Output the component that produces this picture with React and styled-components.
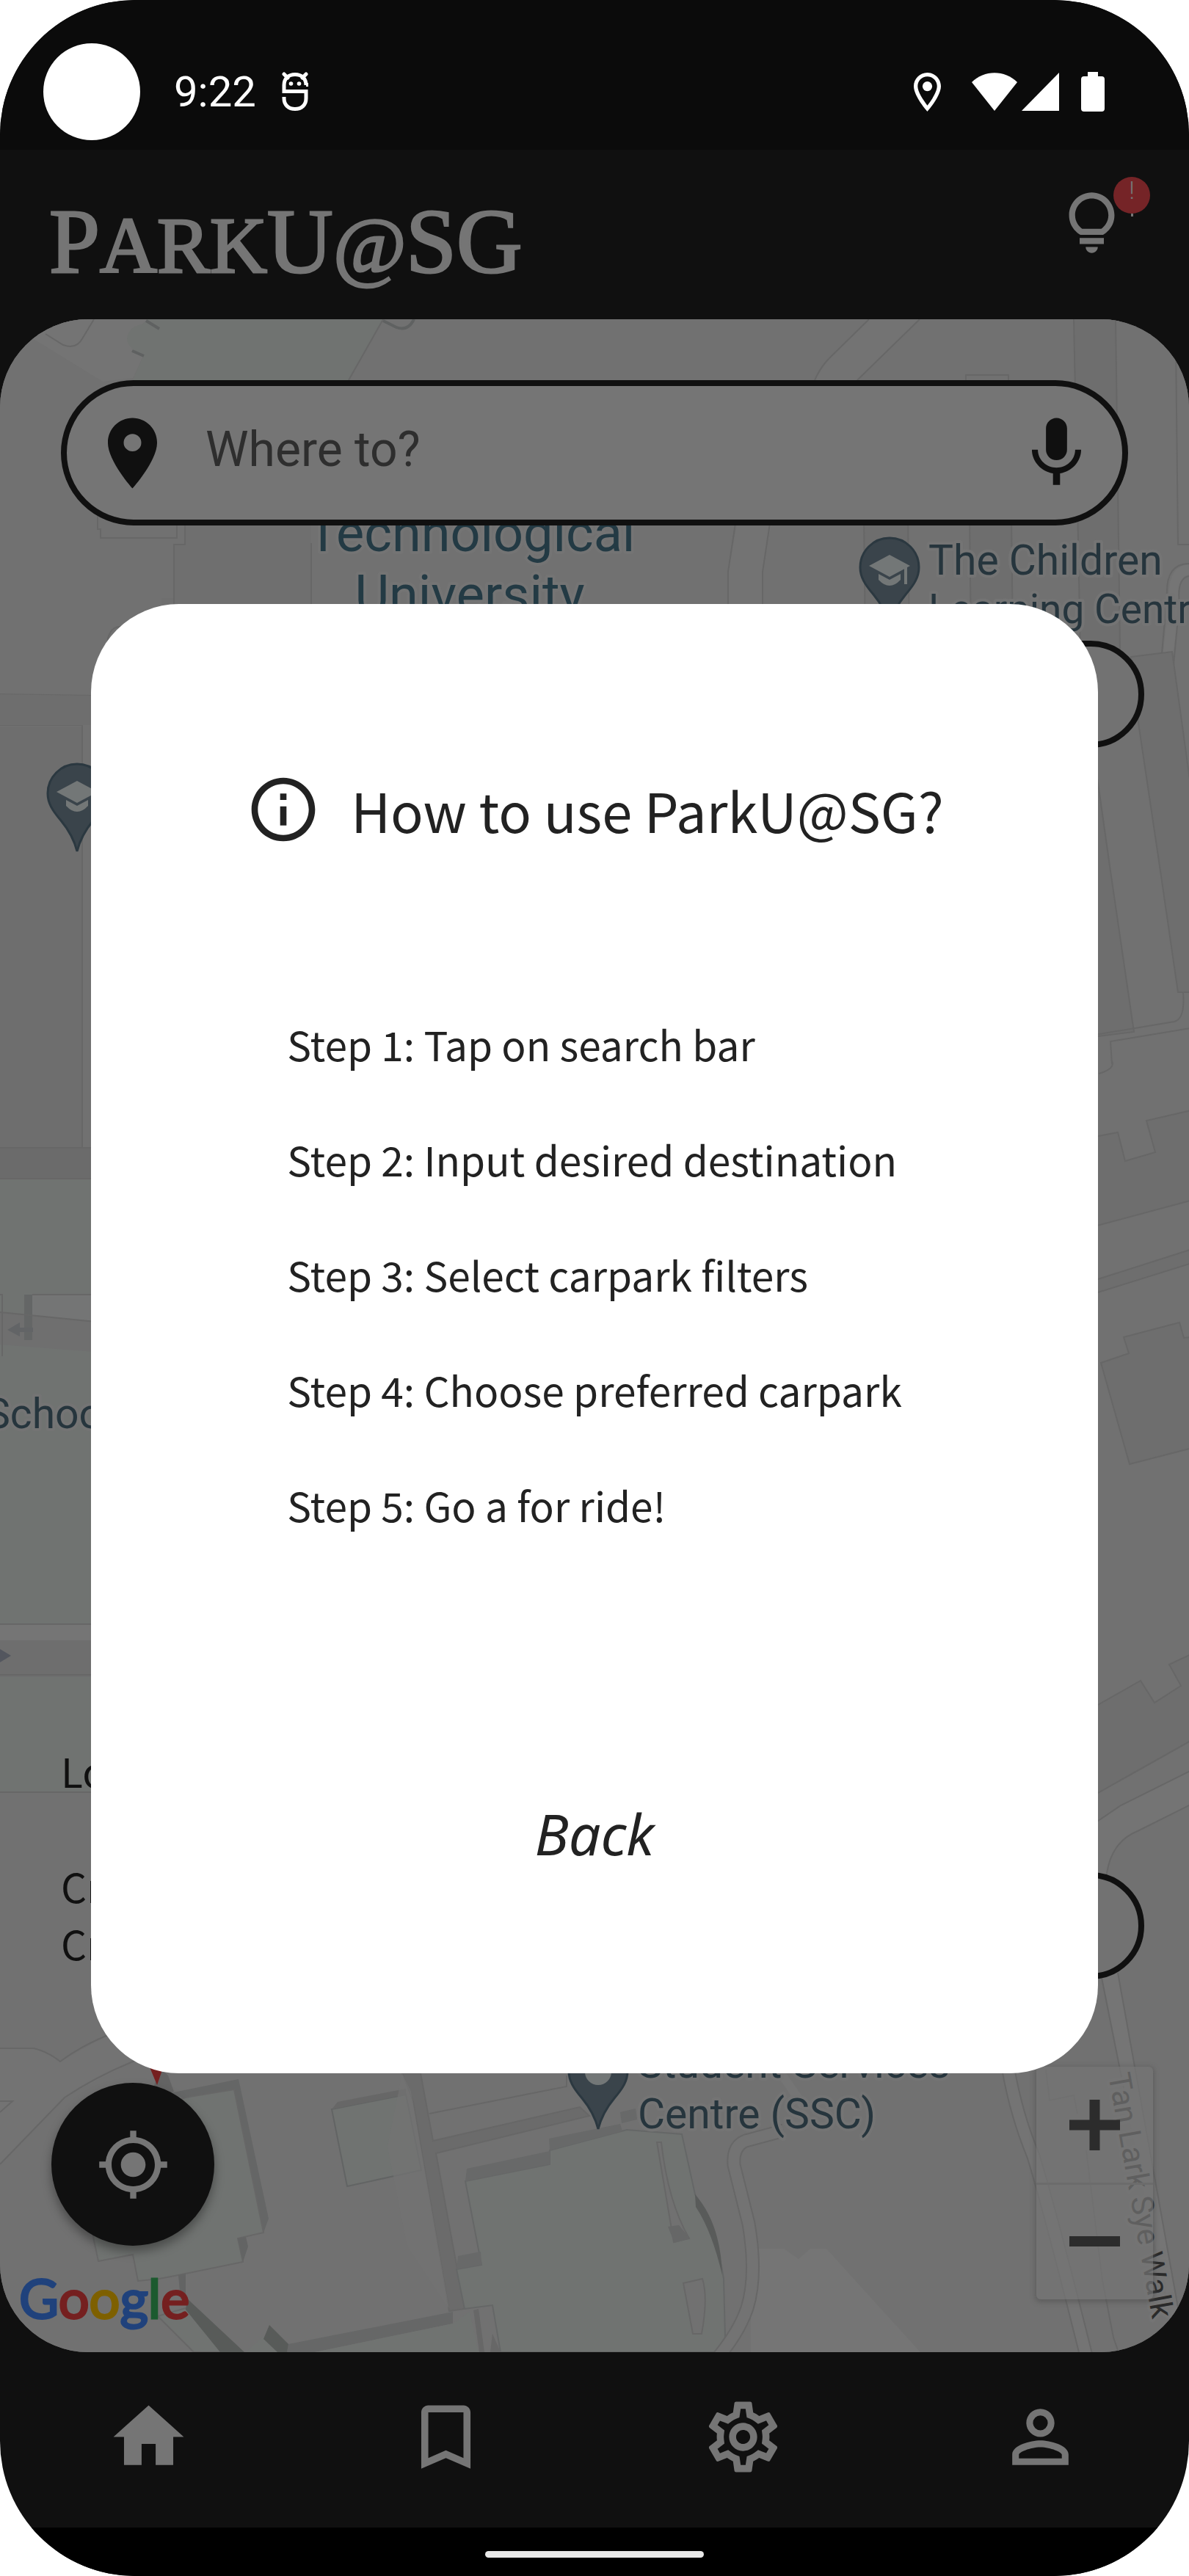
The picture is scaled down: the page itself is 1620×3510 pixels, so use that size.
import React from "react";
import styled, { createGlobalStyle } from "styled-components";
import {
  MdBookmarkBorder,
  MdGpsFixed,
  MdHome,
  MdInfoOutline,
  MdLocationOn,
  MdMic,
  MdOutlineSettings,
  MdPersonOutline,
} from "react-icons/md";

const roboto = `Roboto, "Liberation Sans", sans-serif`;
const sourceSans = `"Noto Sans CJK SC", "Noto Sans CJK JP", "Noto Sans", sans-serif`;

const GlobalStyle = createGlobalStyle`
  *, *::before, *::after { box-sizing: border-box; }
  body { margin: 0; background: #ffffff; font-family: ${roboto}; }
  button { appearance: none; border: 0; margin: 0; padding: 0; background: none; color: inherit; font: inherit; cursor: pointer; }
`;

const Phone = styled.div`
  display: flex;
  flex-direction: column;
  min-height: 100vh;
  overflow: hidden;
  border-radius: 184px;
  background: #101010;
`;

const StatusBar = styled.div`
  display: flex;
  align-items: center;
  justify-content: space-between;
  height: 204px;
  padding: 46px 115px 0 59px;
  background: #0b0b0b;
  color: #ffffff;
`;

const Cluster = styled.div`
  display: flex;
  align-items: center;
  gap: ${(p) => p.$gap}px;
`;

const Camera = styled.span`
  width: 132px;
  height: 132px;
  margin-right: 11px;
  border-radius: 50%;
  background: #ffffff;
`;

const Clock = styled.time`
  font-size: 58px;
  line-height: 72px;
`;

const Header = styled.header`
  display: flex;
  align-items: flex-start;
  justify-content: space-between;
  height: 231px;
  padding: 50px 83px 0 67px;
  color: #757575;
`;

const Brand = styled.h1`
  margin: 0;
  font-family: "Liberation Serif", serif;
  font-size: 124px;
  font-weight: 400;
  line-height: 152px;
  -webkit-text-stroke: 3px #757575;
`;

const Small = styled.span`
  font-size: 108px;
  text-transform: uppercase;
`;

const At = styled.em`
  font-size: 108px;
`;

const TipButton = styled.button`
  position: relative;
  width: 99px;
  height: 99px;
`;

const Badge = styled.span`
  position: absolute;
  top: -13px;
  left: 79px;
  width: 50px;
  height: 50px;
  border-radius: 50%;
  background: #752427;
  font-size: 34px;
  font-weight: 300;
  line-height: 36px;
  text-align: center;

  &::after {
    content: "";
    position: absolute;
    top: 50px;
    left: 24px;
    width: 3px;
    height: 4px;
    background: #757575;
  }
`;

const MapArea = styled.main`
  position: relative;
  display: flex;
  flex: 1;
  overflow: hidden;
  border-radius: 120px;
  background: #717171;
`;

const MapCanvas = styled.svg`
  position: absolute;
  inset: 0;
  width: 100%;
  height: 100%;
`;

const MapControls = styled.div`
  position: relative;
  display: flex;
  flex: 1;
  flex-direction: column;
  min-width: 0;
  padding: 83px 0 34px;
  color: #101010;
`;

const SearchBar = styled.form`
  display: flex;
  align-items: center;
  height: 198px;
  margin: 0 83px;
  padding: 0 32px;
  border: 8px solid #101010;
  border-radius: 99px;
  background: #757575;
`;

const SearchLabel = styled.label`
  display: flex;
`;

const SearchInput = styled.input`
  flex: 1;
  min-width: 0;
  height: 100%;
  margin-left: 42px;
  padding: 0 0 10px;
  border: 0;
  outline: 0;
  background: transparent;
  color: #2e2e2e;
  font-family: ${roboto};
  font-size: 66px;

  &::placeholder {
    color: #2e2e2e;
    opacity: 1;
  }
`;

const MicButton = styled.button`
  display: flex;
`;

const Pill = styled.button`
  align-self: flex-end;
  width: 320px;
  height: 146px;
  border: 8px solid #101010;
  border-radius: 73px;
  background: #727272;
`;

const TopPillRow = styled.div`
  display: flex;
  justify-content: flex-end;
  margin-bottom: auto;
  padding: 157px 61px 0 0;
`;

const Note = styled.p`
  margin: 0;
  font-family: ${sourceSans};
  font-size: 55px;
  line-height: 78px;
`;

const Notes = styled.section`
  display: flex;
  flex-direction: column;
  gap: 79px;
  padding: 0 61px 119px 83px;
`;

const NoteRow = styled.div`
  display: flex;
  justify-content: space-between;
  height: 167px;
`;

const BottomRow = styled.div`
  display: flex;
  align-items: flex-start;
  justify-content: space-between;
  padding: 0 49px 0 26px;
`;

const LocateColumn = styled.div`
  display: flex;
  flex-direction: column;
  gap: 31px;
  padding-top: 22px;
`;

const LocateButton = styled.button`
  display: grid;
  place-items: center;
  width: 222px;
  height: 222px;
  margin-left: 44px;
  border-radius: 50%;
  background: #101010;
  box-shadow: 0 8px 14px rgba(0, 0, 0, 0.35);
  color: #757575;
`;

const MapLogo = styled.span`
  font-family: Lato, sans-serif;
  font-size: 74px;
  font-weight: 400;
  line-height: 80px;
`;

const Letter = styled.span`
  color: ${(p) => p.$color};
  -webkit-text-stroke: 3px ${(p) => p.$color};
`;

const ZoomGroup = styled.div`
  display: flex;
  flex-direction: column;
  width: 159px;
  border-radius: 6px;
  background: rgba(117, 117, 117, 0.72);
  box-shadow: 0 2px 6px 2px rgba(80, 80, 80, 0.55);
`;

const ZoomButton = styled.button`
  display: grid;
  place-items: center;
  height: 158px;
  color: #2c2c2c;

  & + & {
    height: 159px;
    border-top: 3px solid #6c6c6c;
  }
`;

const ModalLayer = styled.div`
  position: absolute;
  inset: 0;
  display: flex;
  align-items: center;
  padding: 8px 124px 0;
`;

const Modal = styled.section`
  display: flex;
  flex: 1;
  flex-direction: column;
  align-items: center;
  padding: 228px 0 274px;
  border-radius: 120px;
  background: #ffffff;
  color: #222222;
  font-family: ${sourceSans};
`;

const ModalHeading = styled.div`
  display: flex;
  align-items: center;
  gap: 40px;
  height: 104px;
`;

const ModalTitle = styled.h2`
  margin: 0;
  font-size: 74px;
  font-weight: 400;
  line-height: 104px;
  white-space: nowrap;
`;

const Steps = styled.ul`
  display: flex;
  flex-direction: column;
  gap: 79px;
  margin: 228px 0 358px;
  padding: 0;
  list-style: none;
  font-size: 55px;
  line-height: 78px;
  white-space: nowrap;
`;

const BackButton = styled.button`
  font-family: "Noto Sans", "Open Sans", sans-serif;
  font-size: 77px;
  font-style: italic;
  line-height: 104px;
`;

const NavBar = styled.nav`
  display: grid;
  grid-template-columns: repeat(4, 1fr);
  height: 239px;
  padding-bottom: 8px;
  color: #757575;
`;

const NavLink = styled.a`
  display: grid;
  place-items: center;
  color: inherit;
`;

const GestureBar = styled.div`
  display: flex;
  justify-content: center;
  height: 66px;
  padding-top: 32px;
  background: #000000;
`;

const GestureHandle = styled.span`
  width: 298px;
  height: 9px;
  border-radius: 5px;
  background: #e8e8e8;
`;

function DebugIcon() {
  return (
    <svg width="36" height="54" viewBox="0 0 36 54" fill="none" stroke="#fff" strokeWidth="5">
      <path d="M36 17.500H33V18C33 9 27 3.500 18 3.500S3 9 3 18V26.500H33V36C33 45 27 50.500 18 50.500S3 45 3 36V34" />
      <path d="M3 3L8 8M33 3L28 8" strokeWidth="5" strokeLinecap="round" />
      <circle cx="12.500" cy="16" r="2.800" fill="#fff" stroke="none" />
      <circle cx="23.500" cy="16" r="2.800" fill="#fff" stroke="none" />
    </svg>
  );
}

function StatusPin() {
  return (
    <svg width="37" height="53" viewBox="5 2 14 20" fill="#fff">
      <path fillRule="evenodd" d="M12 2C8.130 2 5 5.130 5 9c0 5.250 7 13 7 13s7-7.750 7-13c0-3.870-3.130-7-7-7zM7 9c0-2.760 2.240-5 5-5s5 2.240 5 5c0 2.880-2.880 7.190-5 9.880C9.920 16.210 7 11.850 7 9z" />
      <circle cx="12" cy="9" r="2.500" />
    </svg>
  );
}

function WifiIcon() {
  return (
    <svg width="62" height="52" viewBox="0 0 62 52" fill="#fff">
      <path d="M0 13C17 -4 45 -4 62 13L31 52Z" />
    </svg>
  );
}

function SignalIcon() {
  return (
    <svg width="51" height="52" viewBox="0 0 51 52" fill="#fff">
      <path d="M0 52L51 0V52Z" />
    </svg>
  );
}

function BatteryIcon() {
  return (
    <svg width="32" height="54" viewBox="0 0 32 54" fill="#fff">
      <path d="M9 0H23V6H28Q32 6 32 10V50Q32 54 28 54H4Q0 54 0 50V10Q0 6 4 6H9Z" />
    </svg>
  );
}

function BulbIcon() {
  return (
    <svg width="99" height="99" viewBox="0 0 24 24" fill="currentColor">
      <path d="M12 22c1.100 0 2-.9 2-2h-4c0 1.100.9 2 2 2zM8 17h8v2H8z" />
      <path fillRule="evenodd" d="M12 2C7.860 2 4.500 5.360 4.500 9.500c0 3.820 2.660 5.860 3.770 6.500h7.460c1.110-.64 3.770-2.680 3.770-6.500C19.500 5.360 16.140 2 12 2zm3.150 12h-6.300C7.800 13.160 6.500 11.770 6.500 9.500 6.500 6.460 8.960 4 12 4s5.500 2.460 5.500 5.500c0 2.270-1.300 3.660-2.350 4.500z" />
    </svg>
  );
}

function MapPin({ x, y, school }) {
  return (
    <g transform={`translate(${x} ${y})`}>
      <path
        d="M0 120C-4 104 -12 90 -22 78C-34 64 -40 54 -40 41A40 40 0 0 1 40 41C40 54 34 64 22 78C12 90 4 104 0 120Z"
        fill="#3a444b"
        stroke="#2b3840"
        strokeWidth="3"
      />
      {school ? (
        <>
          <path d="M-28 39L0 24L28 39L0 54Z" fill="#737777" />
          <path d="M-15 50L0 58L15 50V58Q0 74 -15 58Z" fill="#737777" />
          <path d="M22 40V64" stroke="#737777" strokeWidth="4" />
        </>
      ) : (
        <circle cy="42" r="18" fill="#737777" />
      )}
    </g>
  );
}

function MapDrawing() {
  const green = "#707371";
  const shade = "#6e6e6e";
  const edge = "#676767";
  const light = "#757575";
  return (
    <MapCanvas viewBox="0 435 1620 2770" preserveAspectRatio="xMidYMid slice" aria-hidden="true">
      <rect y="435" width="1620" height="2770" fill="#717171" />

      <path d="M0 435H201L173 461L196 483L181 515L140 520L49 464Z" fill="#747474" />
      <path d="M62 455L86 470Q104 477 113 460L128 435" fill="none" stroke={edge} strokeWidth="2" />
      <path d="M201 435H522L475 518H181L196 483Q173 475 173 461Q176 444 194 442Z" fill={green} />
      <path d="M199 437L217 448M180 478L196 485M522 437L540 446Q556 452 564 435" fill="none" stroke="#5f6161" strokeWidth="4" />
      <path d="M522 435L475 518" stroke={edge} strokeWidth="2" />

      <path d="M252 700H424V823H220V815H237V742H252Z" fill="#6f6f6f" />
      <g fill="none" stroke={edge} strokeWidth="2">
        <path d="M133 700V721H137V733H241V700M252 700V742H237V842M220 860V842H292V870M259 842V833H304V870M424 740V830M147 900V870Q152 850 170 855L190 870" />
        <path d="M0 946L130 948M0 988H112V1563" />
      </g>
      <path d="M0 946L130 948V988H0Z" fill={shade} />
      <path d="M0 990H111V1563H0Z" fill={shade} />

      <path d="M0 1606H130V2442H0Z" fill={green} />
      <path d="M0 1564H130V1606H0Z" fill="#6b6b6b" />
      <path d="M0 1788L130 1800V1842L0 1832Z" fill="#6f6f6f" />
      <path d="M44 1764H130V1800L44 1792Z" fill="#747575" />
      <path d="M33 1764H44V1826H33Z" fill="#646666" />
      <path d="M10 1812L27 1802V1809H45V1815H27V1821Z" fill="#626466" />
      <path d="M0 2213H130V2235H0Z" fill={light} />
      <path d="M0 2235H130V2285H0Z" fill={shade} />
      <path d="M0 2247L15 2256L0 2265Z" fill="#53565e" />
      <path d="M0 1564H130M0 1606H130M44 1764H130M0 1788L130 1801M0 1764H3V1848M0 2213H130M0 2282H130M0 2442H130" fill="none" stroke={edge} strokeWidth="2" />

      <path d="M1184 435L1130 488L1110 518V716H1004L992 779V830H1039V779L1051 716L1168 518L1253 435Z" fill="#737373" />
      <path d="M1184 435L1130 488Q1118 500 1110 518M1253 435L1168 518M1004 700L992 779V830M1051 700L1039 779V830" fill="none" stroke={edge} strokeWidth="2" />
      <path d="M1463 435H1520L1526 887H1472Z" fill="#6e6e6e" />
      <path d="M1177 700H1237V880H1179ZM1321 700H1378V880H1323Z" fill="#6e6e6e" />
      <path d="M1463 435L1472 887M1520 435L1526 887H1474M1177 700L1179 880M1237 700L1239 880M1321 700L1323 880M1378 700L1380 880M1316 530V511H1374V530M1602 468L1605 742H1620" fill="none" stroke={edge} strokeWidth="2" />
      <path d="M1590 905L1600 815Q1598 778 1620 776" fill="none" stroke={light} strokeWidth="14" />
      <path d="M1583 890L1590 812Q1588 768 1620 768M1599 905L1607 822Q1603 788 1620 785" fill="none" stroke={edge} strokeWidth="2" />

      <g fill="#6e6e6e" stroke={edge} strokeWidth="2">
        <path d="M1541 895L1597 888L1640 1200V1352H1605L1580 1180L1551 985Z" />
        <path d="M1480 960L1497 1074L1512 1180L1545 1406L1480 1414Z" />
        <path d="M1480 1551L1523 1543L1533 1582L1574 1570L1562 1527L1640 1509V1631L1480 1674Z" />
        <path d="M1480 1748L1640 1697V1716L1480 1766Z" />
        <path d="M1500 1857L1538 1844L1531 1822L1607 1802L1613 1823L1640 1820V1969L1539 1995Z" />
        <path d="M1480 2332L1554 2290L1573 2320L1609 2297L1593 2268L1640 2246V2362L1480 2452Z" />
      </g>
      <path d="M1480 1412L1600 1392Q1615 1388 1612 1352M1515 1450L1513 1419L1640 1398M1497 1463Q1520 1456 1515 1446" fill="none" stroke={edge} strokeWidth="2" />
      <path d="M1507 2560Q1512 2510 1550 2495L1640 2450V2404L1527 2460L1480 2492V2560Z" fill="#747474" />
      <path d="M1507 2560Q1512 2510 1550 2495L1640 2450M1640 2404L1527 2460L1480 2492" fill="none" stroke={edge} strokeWidth="2" />

      <path d="M0 2791H46Q66 2796 82 2809L147 2773L220 2790L181 2809L88 2858L0 2949Z" fill="#737373" />
      <path d="M0 2791H46Q66 2796 82 2809Q110 2788 147 2773M200 2800L181 2809Q130 2830 88 2858L0 2949M0 2863H17L0 2878" fill="none" stroke={edge} strokeWidth="2" />
      <path d="M204 2860L218 2818L229 2828L237 2850Z" fill="#636363" />
      <path d="M202 2812H224L214 2841Z" fill="#752020" />
      <path d="M232 2852L325 2833L366 3023L359 3042L319 2847L253 2860Z" fill="#656666" />
      <path d="M105 2900L253 2858L319 2847L359 3042L324 3050L331 3082L243 3100L217 3105L188 3108L181 3072L134 3081L128 3053Z" fill={green} stroke={edge} strokeWidth="2" />
      <path d="M324 3050L335 3048L338 3061L331 3082ZM243 3100L253 3098V3133H246Z" fill="#636464" />
      <path d="M452 2874L553 2854L574 2957L473 2979Z" fill={green} stroke="#626464" strokeWidth="2" />
      <path d="M452 2874L460 2864L553 2846V2854Z" fill="#676767" />
      <path d="M548 2825H573L590 2917L790 2871L803 2883L594 2934L633 3146L612 3149L563 2864Z" fill="#6b6b6b" stroke={edge} strokeWidth="2" />
      <path d="M548 2825L528 2925L555 3060L612 3146L560 2850Z" fill="#737373" opacity="0.7" />
      <path d="M585 2880L772 2843V2828" fill="none" stroke={edge} strokeWidth="2" />
      <path d="M634 2972L749 2949V2930L854 2902L929 2908L947 2990Q978 3050 986 3105L988 3185L975 3205H682L671 3141L633 3146L622 3092L656 3086Z" fill={green} stroke="#656767" strokeWidth="2" />
      <path d="M634 2972L636 2955L749 2931V2949ZM749 2930L748 2914L845 2894L848 2904ZM622 3092L624 3074L655 3068L656 3086ZM845 2878L866 2873L868 2888L847 2893Z" fill="#686969" />
      <path d="M895 2919H901Q910 3000 939 3050L918 3055Z" fill="#717171" stroke={edge} strokeWidth="2" />
      <path d="M910 3034L925 3032L940 3050L919 3056Z" fill="#666767" />
      <path d="M947 2990Q982 3030 984 3100Q970 3040 948 3007Z" fill="#595b5a" />
      <path d="M931 3111L957 3105Q965 3130 956 3180H944Z" fill="#717171" stroke={edge} strokeWidth="2" />
      <path d="M393 3194L617 3150V3166L429 3205H391Z" fill="#666767" />
      <path d="M429 3205L617 3166L640 3150L652 3205Z" fill={green} />
      <path d="M645 3148L652 3146L660 3205H653ZM671 3180L682 3205H668Z" fill="#676767" />
      <path d="M215 3156L253 3145L302 3205H264Z" fill={green} stroke={edge} strokeWidth="2" />
      <path d="M255 3132L333 3205H300L253 3147Z" fill="#585b59" />
      <path d="M335 3205L359 3183L378 3205Z" fill={green} />
      <path d="M367 3168L393 3194L391 3205H378L359 3187Z" fill="#585b59" />
      <path d="M1023 3064H1068L1088 3078L1104 3064H1126L1254 3205H1023Z" fill={light} />
      <path d="M1068 2903L1016 2917Q998 2924 1000 2950L1020 3030Q1032 3100 1018 3145Q1008 3175 980 3210" fill="none" stroke={edge} strokeWidth="19" />
      <path d="M1068 2903L1016 2917Q998 2924 1000 2950L1020 3030Q1032 3100 1018 3145Q1008 3175 980 3210" fill="none" stroke="#737373" strokeWidth="15" />
      <path d="M1064 2825L1095 2870" fill="none" stroke="#757575" strokeWidth="12" />
      <path d="M1373 2815Q1384 2880 1408 2938Q1430 3010 1480 3210" fill="none" stroke={edge} strokeWidth="19" />
      <path d="M1373 2815Q1384 2880 1408 2938Q1430 3010 1480 3210" fill="none" stroke="#747474" strokeWidth="15" />
      <path d="M1500 2690L1570 3040L1605 3205H1615L1523 2688Z" fill={light} />
      <path d="M1500 2690L1536 2870M1523 2688L1605 3144M1425 2820L1430 2862L1463 2855L1468 2880M1480 2930L1502 3107L1517 3185L1524 3205" fill="none" stroke={edge} strokeWidth="2" />

      <MapPin x={1212} y={732} school />
      <MapPin x={105} y={1040} school />
      <MapPin x={815} y={2781} />

      <g fontFamily='Roboto, "Liberation Sans", sans-serif' fill="#26353d" stroke="#747474" strokeWidth="8" strokeLinejoin="round" paintOrder="stroke">
        <g fontSize="72" textAnchor="middle" fill="#233a44">
          <text x="642" y="751">Technological</text>
          <text x="640" y="835">University</text>
        </g>
        <g fontSize="57">
          <text x="1265" y="783">The Children</text>
          <text x="1265" y="849" fontSize="55">Learning Centre</text>
          <text x="-20" y="1946">School</text>
          <text x="869" y="2831">Student Services</text>
          <text x="869" y="2900">Centre (SSC)</text>
        </g>
        <text fontSize="42" fill="#2a2a2a" transform="translate(1510 2827) rotate(79.800)">Tan Lark Sye Walk</text>
      </g>
    </MapCanvas>
  );
}

const steps = [
  "Step 1: Tap on search bar",
  "Step 2: Input desired destination",
  "Step 3: Select carpark filters",
  "Step 4: Choose preferred carpark",
  "Step 5: Go a for ride!",
];

const logoLetters = [
  ["G", "#20427c"],
  ["o", "#752020"],
  ["o", "#7e6000"],
  ["g", "#20427c"],
  ["l", "#1c5a2f"],
  ["e", "#752020"],
];

const navItems = [
  ["Home", MdHome],
  ["Bookmarks", MdBookmarkBorder],
  ["Settings", MdOutlineSettings],
  ["Profile", MdPersonOutline],
];

export default function App() {
  return (
    <>
      <GlobalStyle />
      <Phone>
        <StatusBar>
          <Cluster $gap={35}>
            <Camera />
            <Clock>9:22</Clock>
            <DebugIcon />
          </Cluster>
          <Cluster $gap={42}>
            <StatusPin />
            <Cluster $gap={30}>
              <Cluster $gap={6}>
                <WifiIcon />
                <SignalIcon />
              </Cluster>
              <BatteryIcon />
            </Cluster>
          </Cluster>
        </StatusBar>

        <Header>
          <Brand>
            P<Small>ark</Small>U<At>@</At>SG
          </Brand>
          <TipButton type="button" aria-label="Tips">
            <BulbIcon />
            <Badge>!</Badge>
          </TipButton>
        </Header>

        <MapArea>
          <MapDrawing />
          <MapControls>
            <SearchBar onSubmit={(e) => e.preventDefault()}>
              <SearchLabel htmlFor="destination" aria-label="Destination">
                <MdLocationOn size={115} />
              </SearchLabel>
              <SearchInput id="destination" type="text" placeholder="Where to?" />
              <MicButton type="button" aria-label="Voice search">
                <MdMic size={115} />
              </MicButton>
            </SearchBar>
            <TopPillRow>
              <Pill type="button" aria-label="Filter" />
            </TopPillRow>
            <Notes>
              <Note>Lo</Note>
              <NoteRow>
                <Note>
                  Cr
                  <br />
                  Cr
                </Note>
                <Pill type="button" aria-label="Select" />
              </NoteRow>
            </Notes>
            <BottomRow>
              <LocateColumn>
                <LocateButton type="button" aria-label="My location">
                  <MdGpsFixed size={101} />
                </LocateButton>
                <MapLogo>
                  {logoLetters.map(([letter, color], i) => (
                    <Letter key={i} $color={color}>
                      {letter}
                    </Letter>
                  ))}
                </MapLogo>
              </LocateColumn>
              <ZoomGroup>
                <ZoomButton type="button" aria-label="Zoom in">
                  <svg width="69" height="69" viewBox="0 0 69 69" fill="currentColor">
                    <path d="M0 27.500H27.500V0H41.500V27.500H69V41.500H41.500V69H27.500V41.500H0Z" />
                  </svg>
                </ZoomButton>
                <ZoomButton type="button" aria-label="Zoom out">
                  <svg width="69" height="69" viewBox="0 0 69 69" fill="currentColor">
                    <path d="M0 26H69V40H0Z" />
                  </svg>
                </ZoomButton>
              </ZoomGroup>
            </BottomRow>
          </MapControls>

          <ModalLayer>
            <Modal role="dialog" aria-labelledby="how-to-title">
              <ModalHeading>
                <MdInfoOutline size={104} />
                <ModalTitle id="how-to-title">How to use ParkU@SG?</ModalTitle>
              </ModalHeading>
              <Steps>
                {steps.map((step) => (
                  <li key={step}>{step}</li>
                ))}
              </Steps>
              <BackButton type="button">Back</BackButton>
            </Modal>
          </ModalLayer>
        </MapArea>

        <NavBar>
          {navItems.map(([name, Icon]) => (
            <NavLink key={name} href="#" aria-label={name}>
              <Icon size={115} />
            </NavLink>
          ))}
        </NavBar>
        <GestureBar>
          <GestureHandle />
        </GestureBar>
      </Phone>
    </>
  );
}
